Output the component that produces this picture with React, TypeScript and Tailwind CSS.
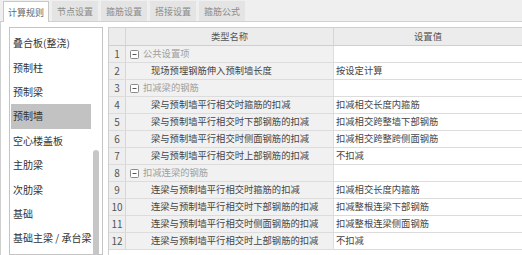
import { FC } from 'react';
import { clsx } from 'clsx';

const tabs = ['计算规则', '节点设置', '箍筋设置', '搭接设置', '箍筋公式'];

const components = ['叠合板(整浇)', '预制柱', '预制梁', '预制墙', '空心楼盖板', '主肋梁', '次肋梁', '基础', '基础主梁 / 承台梁'];

type Row = { group?: boolean; name: string; value?: string };

const rows: Row[] = [
	{ group: true, name: '公共设置项' },
	{ name: '现场预埋钢筋伸入预制墙长度', value: '按设定计算' },
	{ group: true, name: '扣减梁的钢筋' },
	{ name: '梁与预制墙平行相交时箍筋的扣减', value: '扣减相交长度内箍筋' },
	{ name: '梁与预制墙平行相交时下部钢筋的扣减', value: '扣减相交跨整墙下部钢筋' },
	{ name: '梁与预制墙平行相交时侧面钢筋的扣减', value: '扣减相交跨整跨侧面钢筋' },
	{ name: '梁与预制墙平行相交时上部钢筋的扣减', value: '不扣减' },
	{ group: true, name: '扣减连梁的钢筋' },
	{ name: '连梁与预制墙平行相交时箍筋的扣减', value: '扣减相交长度内箍筋' },
	{ name: '连梁与预制墙平行相交时下部钢筋的扣减', value: '扣减整根连梁下部钢筋' },
	{ name: '连梁与预制墙平行相交时侧面钢筋的扣减', value: '扣减整根连梁侧面钢筋' },
	{ name: '连梁与预制墙平行相交时上部钢筋的扣减', value: '不扣减' },
];

const MinusBox: FC = () => (
	<svg width="9" height="9" viewBox="0 0 9 9" className="mr-[4px] shrink-0">
		<rect x="0.5" y="0.5" width="8" height="8" rx="1" fill="#fff" stroke="#8a8a8a" />
		<path d="M2.5 4.5h4" stroke="#555" strokeWidth="1" />
	</svg>
);

export default function App() {
	return (
		<div className="flex h-[255px] w-[522px] flex-col overflow-hidden bg-white font-['Noto_Sans_CJK_SC',sans-serif] text-[#333]">
			<div className="flex h-[22px] shrink-0 items-end gap-[3px] border-b border-[#d0d0d0] bg-[#efefef] pl-[3px]">
				{tabs.map((t, i) => (
					<div
						key={t}
						className={clsx(
							'flex h-[20px] w-[46px] items-center justify-center text-[9px] leading-none',
							i === 0 ? '-mb-px h-[21px] border border-b-0 border-[#c8c8c8] bg-white text-[#666]' : 'bg-[#e4e4e4] text-[#8a8a8a]',
						)}
					>
						{t}
					</div>
				))}
			</div>
			<div className="flex flex-1 gap-[5px] border-l border-[#d0d0d0] pl-[8px] pt-[5px]">
				<div className="relative w-[94px] shrink-0 border border-[#c4c4c4] bg-white pt-[3px]">
					{components.map((c, i) => (
						<div
							key={c}
							className={clsx(
								'ml-[1px] flex h-[24.4px] w-[80px] items-center whitespace-nowrap pl-[2px] text-[10px] leading-none',
								i === 3 && 'bg-[#c2c2c2]',
							)}
						>
							{c}
						</div>
					))}
					<div className="absolute right-[3px] top-[122px] h-[120px] w-[6px] rounded-[3px] bg-[#c6c6c6]" />
				</div>
				<div className="flex-1 border-l border-t border-[#cfcfcf]">
					<div className="grid h-[18px] grid-cols-[17px_208px_1fr] border-b border-[#cfcfcf] bg-[#ececec] text-[9.3px] leading-none text-[#555]">
						<div className="border-r border-[#d6d6d6]" />
						<div className="flex items-center justify-center border-r border-[#d6d6d6]">类型名称</div>
						<div className="flex items-center justify-center">设置值</div>
					</div>
					{rows.map((r, i) => (
						<div key={i} className="grid h-[17px] grid-cols-[17px_208px_1fr] border-b border-[#dcdcdc] text-[9.3px] leading-none">
							<div className="flex items-center justify-center border-r border-[#d6d6d6] bg-[#eeeeee] text-[10px] text-[#555]">{i + 1}</div>
							{r.group ? (
								<div className="flex items-center overflow-hidden border-r border-[#dedede] bg-[#f1f1f1] pl-[4px] text-[#a0a0a0]">
									<MinusBox />
									{r.name}
								</div>
							) : (
								<div className="flex items-center overflow-hidden whitespace-nowrap border-r border-[#dedede] bg-[#f1f1f1] pl-[25px] text-[#444]">{r.name}</div>
							)}
							<div className="flex items-center overflow-hidden whitespace-nowrap bg-white pl-[2px] text-[#444]">{r.value}</div>
						</div>
					))}
				</div>
			</div>
		</div>
	);
}
